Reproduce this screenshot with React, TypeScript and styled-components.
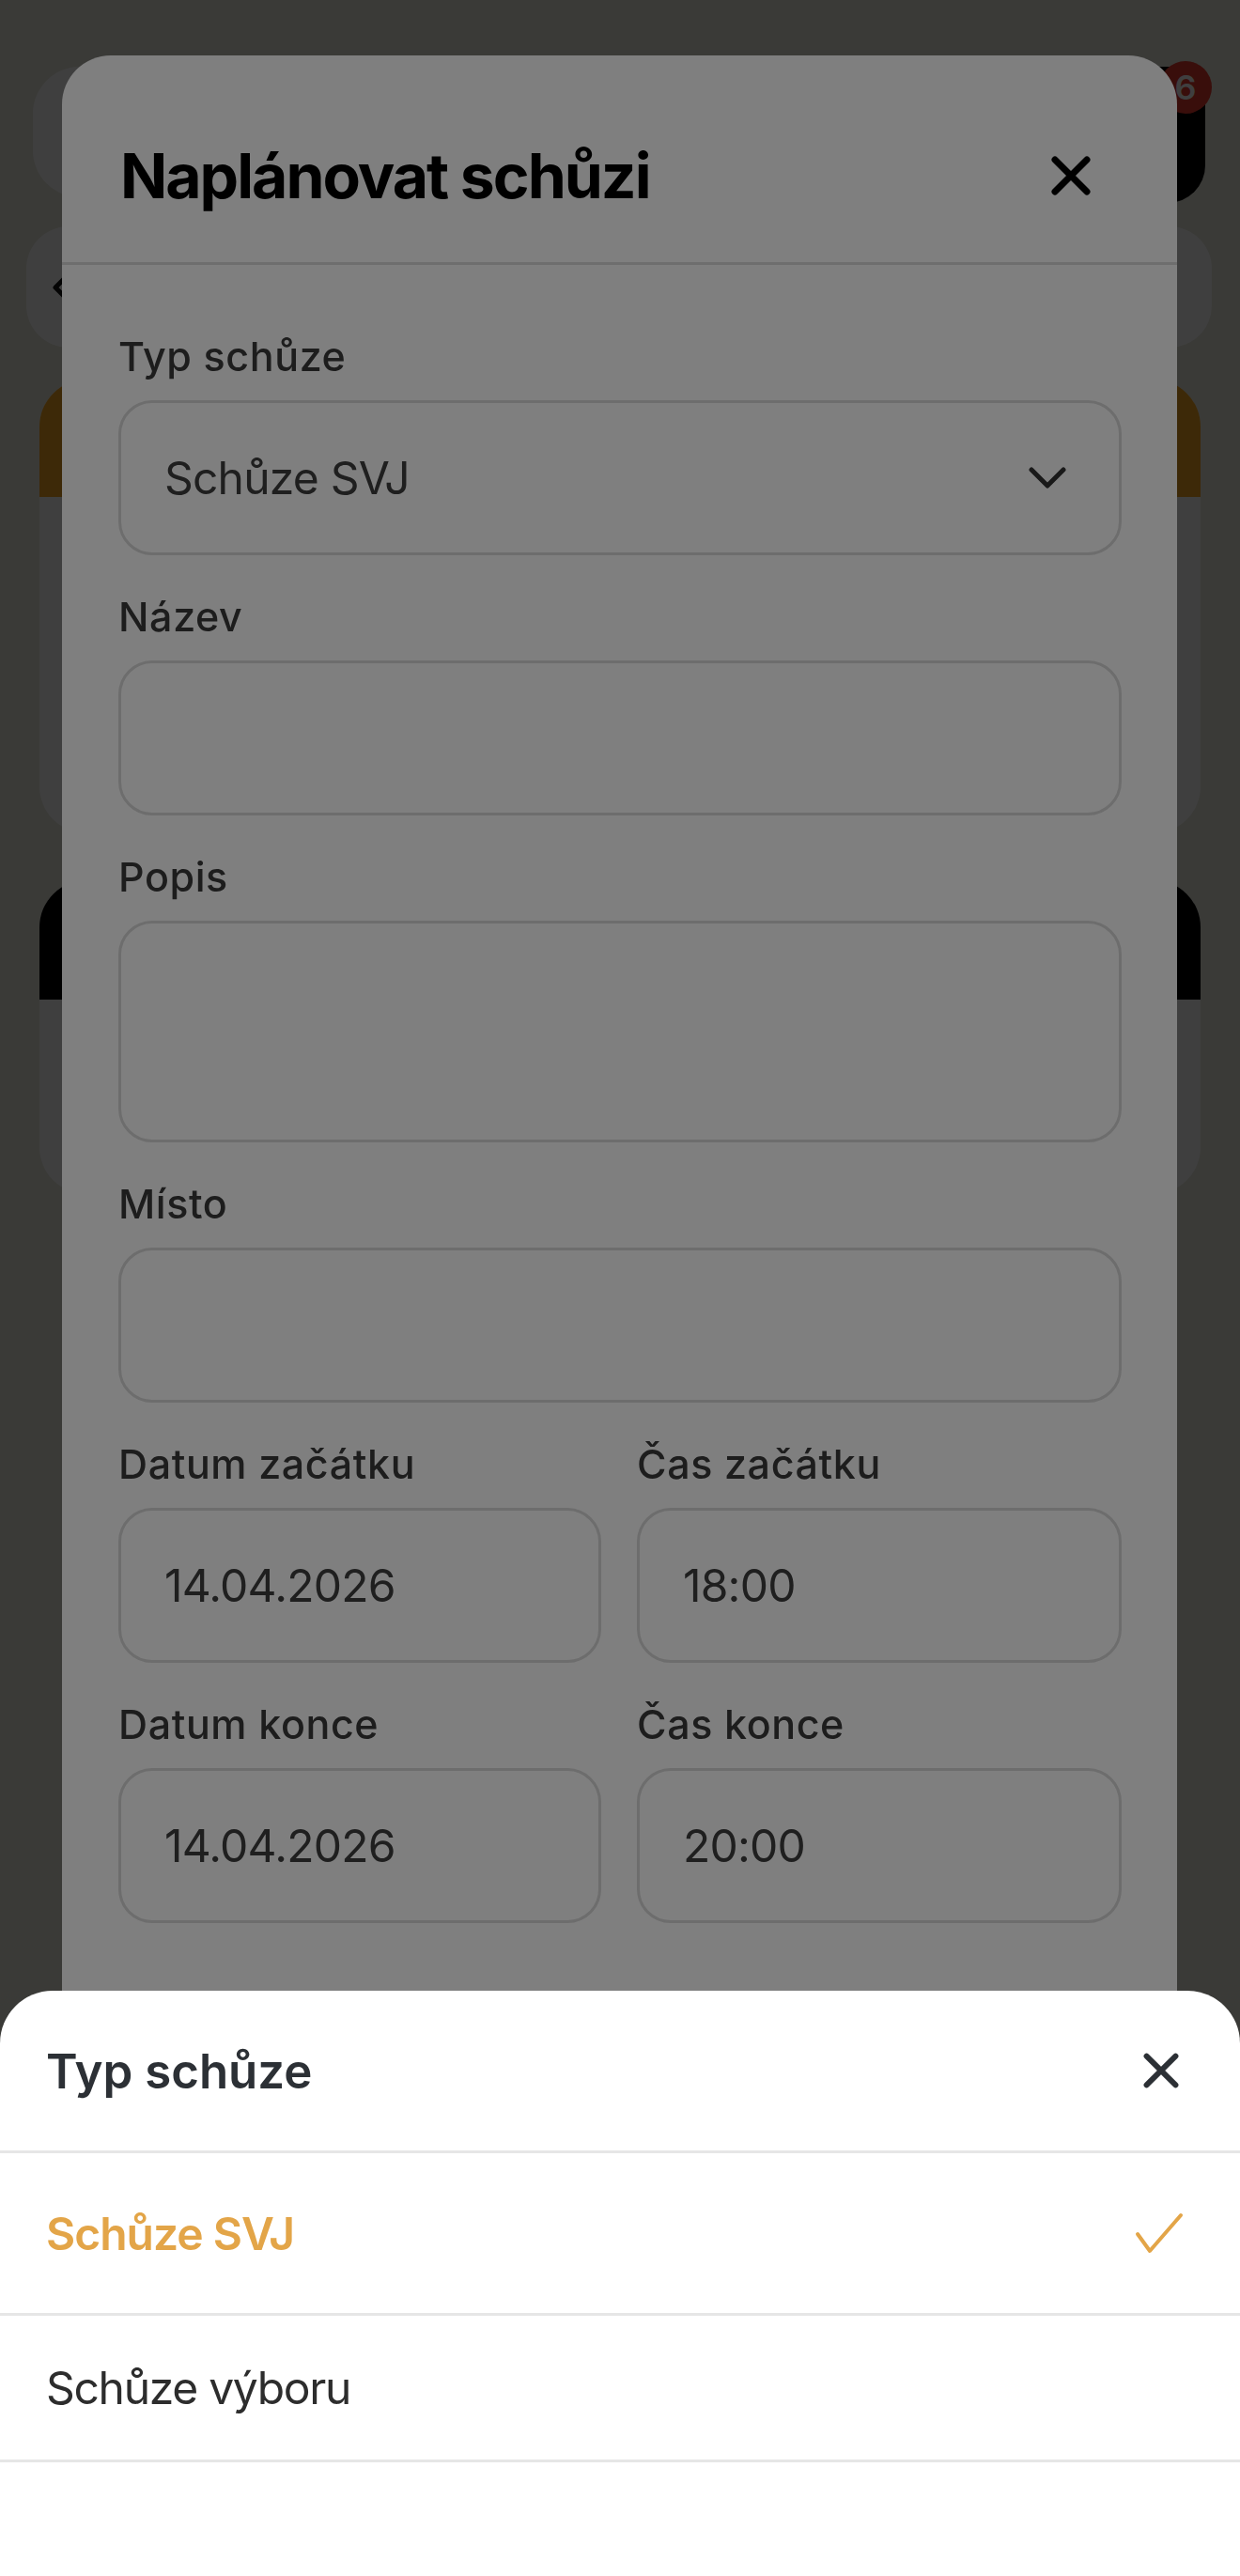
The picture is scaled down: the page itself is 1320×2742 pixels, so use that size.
import React from 'react';
import styled, { createGlobalStyle } from 'styled-components';

const GlobalStyle = createGlobalStyle`
  html, body {
    margin: 0;
    padding: 0;
  }
  body {
    background: #e9e9de;
    font-family: Inter, "Noto Sans", sans-serif;
    -webkit-font-smoothing: antialiased;
  }
`;

// ---- page behind the dialogs ----

const Page = styled.div`
  min-height: 2742px;
  box-sizing: border-box;
  padding-top: 71px;
  display: flex;
  flex-direction: column;
`;

const TopBar = styled.div`
  display: flex;
  align-items: flex-start;
  gap: 24px;
  padding: 0 37px 0 35px;
`;

const HeaderCard = styled.div`
  flex: 1;
  height: 139px;
  border-radius: 50px;
  background: #ffffff;
`;

const BellButton = styled.div`
  position: relative;
  width: 145px;
  height: 145px;
  border-radius: 40px;
  background: #000000;
`;

const Badge = styled.span`
  position: absolute;
  top: -6px;
  right: -7px;
  width: 56px;
  height: 56px;
  border-radius: 50%;
  background: #e5392c;
  color: #ffffff;
  font-size: 36px;
  font-weight: 600;
  display: flex;
  align-items: center;
  justify-content: center;
`;

const SearchCard = styled.div`
  margin: 25px 30px 0 28px;
  height: 129px;
  border-radius: 45px;
  background: #ffffff;
  display: flex;
  align-items: center;
  padding-left: 28px;
`;

const EventCard = styled.div<{ $height: number }>`
  margin: 0 42px;
  height: ${(p) => p.$height}px;
  border-radius: 50px;
  background: #ffffff;
  overflow: hidden;
  & + & {
    margin-top: 50px;
  }
`;

const CardHead = styled.div<{ $color: string; $height: number }>`
  height: ${(p) => p.$height}px;
  background: ${(p) => p.$color};
`;

const Cards = styled.div`
  margin-top: 34px;
  display: flex;
  flex-direction: column;
`;

// ---- modal ----

const Scrim = styled.div<{ $z: number }>`
  position: fixed;
  inset: 0;
  z-index: ${(p) => p.$z};
  background: rgba(0, 0, 0, 0.5);
`;

const Modal = styled.div`
  position: fixed;
  z-index: 2;
  top: 59px;
  left: 66px;
  width: 1187px;
  bottom: -80px;
  background: #ffffff;
  border-radius: 52px;
  display: flex;
  flex-direction: column;
  overflow: hidden;
`;

const ModalHeader = styled.div`
  display: flex;
  align-items: center;
  justify-content: space-between;
  padding: 88px 91px 52px 62px;
  border-bottom: 3px solid #dcdcdc;
`;

const ModalTitle = styled.h2`
  margin: 0;
  font-size: 66px;
  line-height: 80px;
  font-weight: 700;
  letter-spacing: -2px;
  color: #000000;
`;

const IconButton = styled.button<{ $w: number; $h: number }>`
  width: ${(p) => p.$w}px;
  height: ${(p) => p.$h}px;
  padding: 0;
  border: none;
  background: none;
  display: flex;
  align-items: center;
  justify-content: center;
`;

const ModalBody = styled.div`
  padding: 72px 59px 0 60px;
  display: flex;
  flex-direction: column;
  gap: 40px;
`;

const Field = styled.div`
  display: flex;
  flex-direction: column;
`;

const Row = styled.div`
  display: grid;
  grid-template-columns: 514px 516px;
  column-gap: 38px;
`;

const Label = styled.label`
  display: block;
  font-size: 43px;
  line-height: 50px;
  font-weight: 500;
  letter-spacing: 0.6px;
  color: #3a3a3a;
  margin-bottom: 22px;
`;

const InputBox = styled.div<{ $tall?: boolean }>`
  height: ${(p) => (p.$tall ? 236 : 165)}px;
  box-sizing: border-box;
  border: 3px solid #dadada;
  border-radius: 36px;
  padding: 0 56px 0 46px;
  display: flex;
  align-items: center;
  justify-content: space-between;
  font-size: 48px;
  letter-spacing: -0.8px;
  color: #3e3e3e;
`;

// ---- bottom sheet ----

const Sheet = styled.div`
  position: fixed;
  z-index: 4;
  left: 0;
  right: 0;
  top: 2119px;
  bottom: 0;
  background: #ffffff;
  border-radius: 56px 56px 0 0;
  display: flex;
  flex-direction: column;
`;

const SheetHeader = styled.div`
  height: 170px;
  flex: none;
  display: flex;
  align-items: center;
  justify-content: space-between;
  padding: 0 64px 0 49px;
  border-bottom: 3px solid #e6e6e6;
`;

const SheetTitle = styled.h3`
  margin: 0;
  font-size: 51px;
  font-weight: 600;
  color: #2c3035;
`;

const Option = styled.div<{ $selected?: boolean; $height: number }>`
  height: ${(p) => p.$height}px;
  flex: none;
  display: flex;
  align-items: center;
  justify-content: space-between;
  padding: 0 60px 0 49px;
  border-bottom: 3px solid #e6e6e6;
  font-size: 48px;
  letter-spacing: ${(p) => (p.$selected ? -1 : -1.3)}px;
  font-weight: ${(p) => (p.$selected ? 600 : 400)};
  color: ${(p) => (p.$selected ? '#e3a548' : '#2d2d2d')};
`;

const CloseIcon = ({ size, stroke, color }: { size: number; stroke: number; color: string }) => (
  <svg width={size} height={size} viewBox="0 0 44 44" fill="none">
    <path d="M5 5L39 39M39 5L5 39" stroke={color} strokeWidth={stroke} strokeLinecap="round" />
  </svg>
);

const ChevronDown = () => (
  <svg width="40" height="24" viewBox="0 0 40 24" fill="none">
    <path d="M3 3L20 20L37 3" stroke="#333333" strokeWidth="5" strokeLinecap="round" strokeLinejoin="round" />
  </svg>
);

const CheckIcon = () => (
  <svg width="52" height="44" viewBox="0 0 52 44" fill="none">
    <path d="M3 23L16 41L49 3" stroke="#e3a548" strokeWidth="4" strokeLinecap="round" strokeLinejoin="round" />
  </svg>
);

const BackIcon = () => (
  <svg width="14" height="22" viewBox="0 0 14 22" fill="none">
    <path d="M12 2L3 11L12 20" stroke="#111111" strokeWidth="5" strokeLinecap="round" strokeLinejoin="round" />
  </svg>
);

const meetingTypes = ['Schůze SVJ', 'Schůze výboru'];

export default function App() {
  const selected = 'Schůze SVJ';

  return (
    <>
      <GlobalStyle />
      <Page>
        <TopBar>
          <HeaderCard />
          <BellButton>
            <Badge>6</Badge>
          </BellButton>
        </TopBar>
        <SearchCard>
          <BackIcon />
        </SearchCard>
        <Cards>
          <EventCard $height={483}>
            <CardHead $color="#f5a623" $height={125} />
          </EventCard>
          <EventCard $height={334}>
            <CardHead $color="#000000" $height={127} />
          </EventCard>
        </Cards>
      </Page>

      <Scrim $z={1} />
      <Modal>
        <ModalHeader>
          <ModalTitle>Naplánovat schůzi</ModalTitle>
          <IconButton $w={44} $h={44}>
            <CloseIcon size={44} stroke={7} color="#000000" />
          </IconButton>
        </ModalHeader>
        <ModalBody>
          <Field>
            <Label>Typ schůze</Label>
            <InputBox>
              Schůze SVJ
              <ChevronDown />
            </InputBox>
          </Field>
          <Field>
            <Label>Název</Label>
            <InputBox />
          </Field>
          <Field>
            <Label>Popis</Label>
            <InputBox $tall />
          </Field>
          <Field>
            <Label>Místo</Label>
            <InputBox />
          </Field>
          <Row>
            <Field>
              <Label>Datum začátku</Label>
              <InputBox>14.04.2026</InputBox>
            </Field>
            <Field>
              <Label>Čas začátku</Label>
              <InputBox>18:00</InputBox>
            </Field>
          </Row>
          <Row>
            <Field>
              <Label>Datum konce</Label>
              <InputBox>14.04.2026</InputBox>
            </Field>
            <Field>
              <Label>Čas konce</Label>
              <InputBox>20:00</InputBox>
            </Field>
          </Row>
        </ModalBody>
      </Modal>

      <Scrim $z={3} />
      <Sheet>
        <SheetHeader>
          <SheetTitle>Typ schůze</SheetTitle>
          <IconButton $w={40} $h={40}>
            <CloseIcon size={40} stroke={6.5} color="#2c3035" />
          </IconButton>
        </SheetHeader>
        {meetingTypes.map((type, i) => (
          <Option key={type} $selected={type === selected} $height={i === 0 ? 170 : 153}>
            {type}
            {type === selected && <CheckIcon />}
          </Option>
        ))}
      </Sheet>
    </>
  );
}
